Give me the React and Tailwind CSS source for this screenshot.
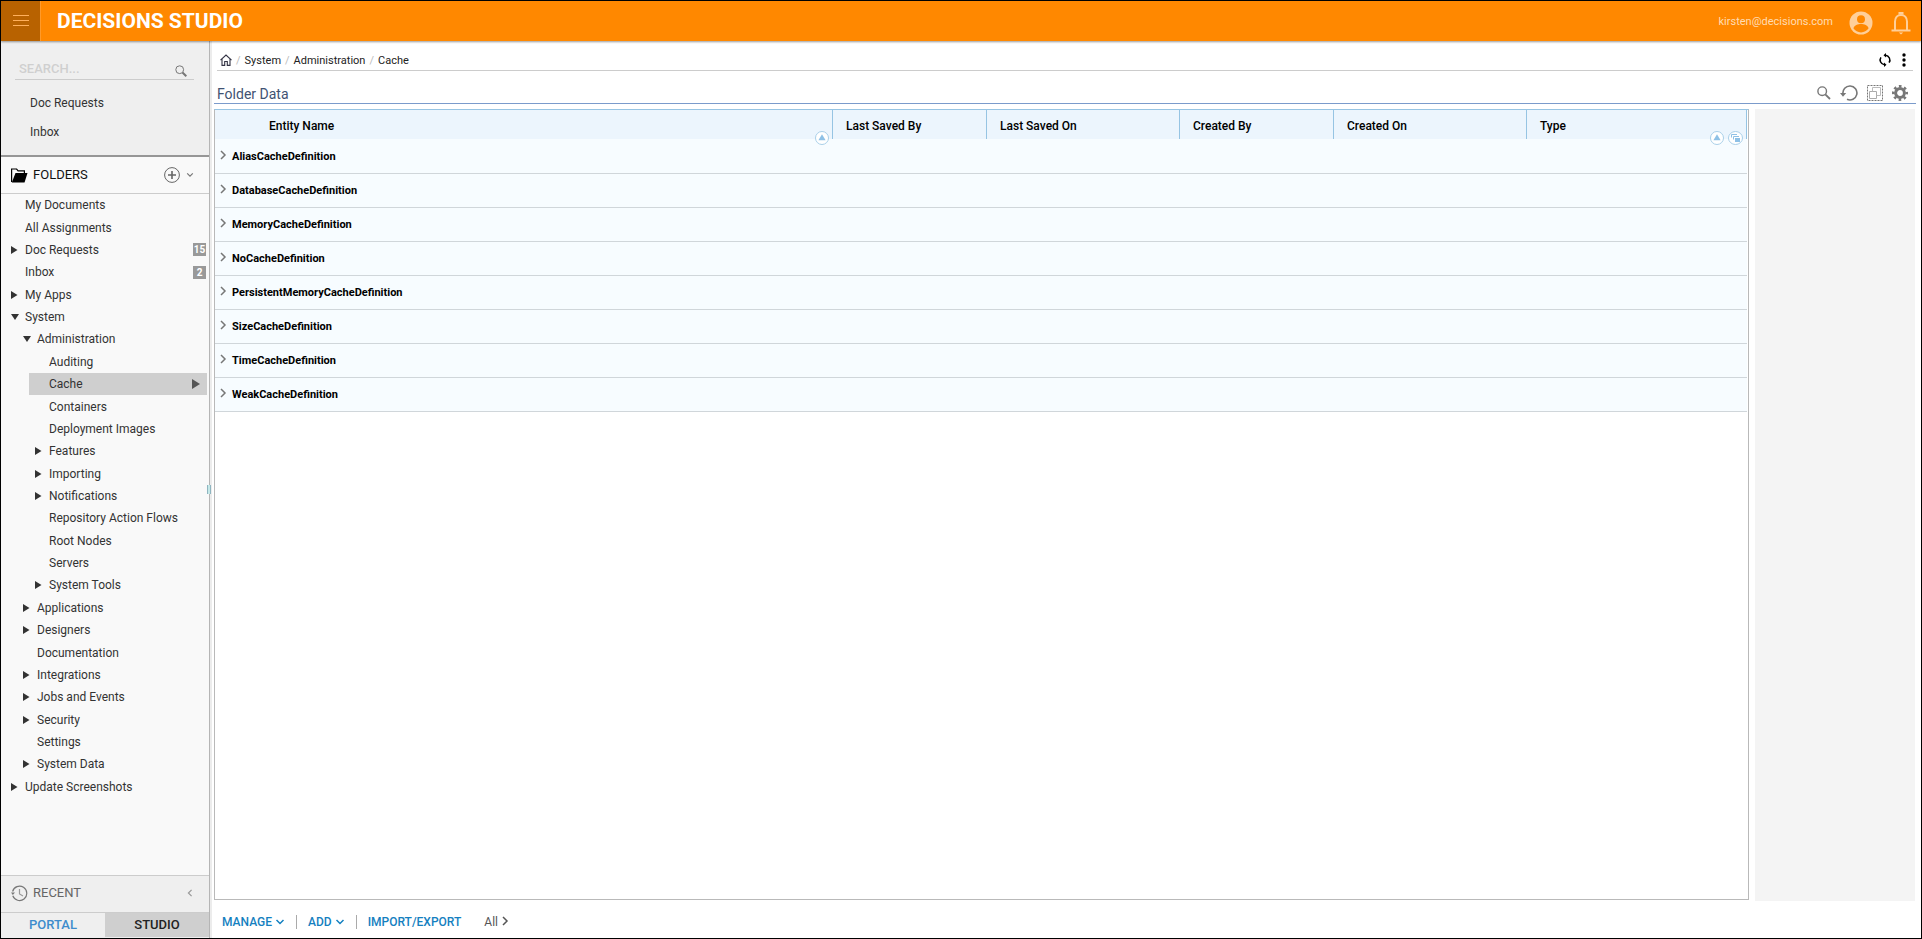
import React from "react";

const shortcuts = ["Doc Requests", "Inbox"];

const folders = [
  { name: "My Documents", level: 0 },
  { name: "All Assignments", level: 0 },
  { name: "Doc Requests", level: 0, state: "closed", count: 15 },
  { name: "Inbox", level: 0, count: 2 },
  { name: "My Apps", level: 0, state: "closed" },
  { name: "System", level: 0, state: "open" },
  { name: "Administration", level: 1, state: "open" },
  { name: "Auditing", level: 2 },
  { name: "Cache", level: 2, selected: true },
  { name: "Containers", level: 2 },
  { name: "Deployment Images", level: 2 },
  { name: "Features", level: 2, state: "closed" },
  { name: "Importing", level: 2, state: "closed" },
  { name: "Notifications", level: 2, state: "closed" },
  { name: "Repository Action Flows", level: 2 },
  { name: "Root Nodes", level: 2 },
  { name: "Servers", level: 2 },
  { name: "System Tools", level: 2, state: "closed" },
  { name: "Applications", level: 1, state: "closed" },
  { name: "Designers", level: 1, state: "closed" },
  { name: "Documentation", level: 1 },
  { name: "Integrations", level: 1, state: "closed" },
  { name: "Jobs and Events", level: 1, state: "closed" },
  { name: "Security", level: 1, state: "closed" },
  { name: "Settings", level: 1 },
  { name: "System Data", level: 1, state: "closed" },
  { name: "Update Screenshots", level: 0, state: "closed" },
];

const indent = ["ml-1", "ml-4", "ml-7"];

const columns = [
  { name: "Last Saved By", width: "w-[154px]" },
  { name: "Last Saved On", width: "w-[193px]" },
  { name: "Created By", width: "w-[154px]" },
  { name: "Created On", width: "w-[193px]" },
  { name: "Type", width: "w-[220px]" },
];

const groups = [
  "AliasCacheDefinition",
  "DatabaseCacheDefinition",
  "MemoryCacheDefinition",
  "NoCacheDefinition",
  "PersistentMemoryCacheDefinition",
  "SizeCacheDefinition",
  "TimeCacheDefinition",
  "WeakCacheDefinition",
];

const Chevron = ({ d, className, width = 1.5 }) => (
  <svg viewBox="0 0 10 10" className={className} fill="none" stroke="currentColor" strokeWidth={width}>
    <path d={d} />
  </svg>
);

const DOWN = "M1.5 3 5 6.5 8.5 3";
const RIGHT = "M3 1 7 5 3 9";
const LEFT = "M7 1 3 5 7 9";

const SortBadge = () => (
  <svg viewBox="0 0 14 14" className="h-3.5 w-3.5">
    <circle cx="7" cy="7" r="6.5" fill="#fff" stroke="#a9cfe8" strokeWidth="1" />
    <path d="M7 3.2 10.6 9.2H3.4z" fill="#8fc1e6" />
  </svg>
);

const GroupBadge = () => (
  <svg viewBox="0 0 15 14" className="h-3.5 w-[15px]">
    <ellipse cx="7.5" cy="7" rx="7" ry="6.5" fill="#fff" stroke="#a9cfe8" strokeWidth="1" />
    <path d="M3.5 6.5v-3H9" fill="none" stroke="#8fc1e6" />
    <path d="M5.5 8.5v-3H11" fill="none" stroke="#8fc1e6" />
    <path d="M7 7h5v4H7z" fill="#8fc1e6" />
  </svg>
);

const Header = () => (
  <header className="relative z-10 flex h-10 shrink-0 items-center bg-[#ff8800] shadow-[0_1px_2px_rgba(0,0,0,0.4)]">
    <button
      aria-label="Menu"
      className="flex h-10 w-10 items-center justify-center border-r border-[#ff9a2a] bg-[#b86200]"
    >
      <svg viewBox="0 0 16 12" className="h-3 w-4" stroke="#ffb05c" strokeWidth="1">
        <path d="M0 .5h16M0 5.5h16M0 10.5h16" />
      </svg>
    </button>
    <h1 className="ml-4 pt-0.5 text-[21px] font-bold text-white">DECISIONS STUDIO</h1>
    <div className="ml-auto flex items-center pr-2.5">
      <span className="pt-0.5 text-[11px] text-[#ffdcb3]">kirsten@decisions.com</span>
      <button aria-label="Account" className="ml-4 pt-1">
        <svg viewBox="0 0 24 24" className="h-6 w-6">
          <circle cx="12" cy="12" r="11.5" fill="#ffcf99" />
          <circle cx="12" cy="8.3" r="4" fill="#ff8800" />
          <path d="M4.5 17.6c0-3.2 4.8-4.6 7.5-4.6s7.5 1.4 7.5 4.6c-1.7 2.3-4.4 3.8-7.5 3.8s-5.8-1.5-7.5-3.8z" fill="#ff8800" />
        </svg>
      </button>
      <button aria-label="Notifications" className="ml-[18px] pt-1">
        <svg viewBox="0 0 20 24" className="h-6 w-5" fill="none" stroke="#ffcf99" strokeWidth="2">
          <path d="M4 19V10.5C4 6.5 6.6 3.9 10 3.9s6 2.6 6 6.6V19" />
          <path d="M.5 19.5h19" />
          <path d="M8.5 3.5V2h3v1.5" />
          <path d="M7.8 21.6h4.4L10 23.6z" fill="#ffcf99" stroke="none" />
        </svg>
      </button>
    </div>
  </header>
);

const FolderRow = ({ folder }) => (
  <li className="flex">
    <a
      href="#"
      className={`flex flex-1 items-center ${indent[folder.level]} ${folder.selected ? "bg-[#cfcfcf]" : ""}`}
    >
      <span className="flex w-5 shrink-0 pl-1.5">
        {folder.state === "closed" && (
          <svg viewBox="0 0 8 8" className="h-2 w-2" fill="#333">
            <path d="M0 0 6.5 4 0 8z" />
          </svg>
        )}
        {folder.state === "open" && (
          <svg viewBox="0 0 8 8" className="h-2 w-2" fill="#333">
            <path d="M0 1h8L4 7z" />
          </svg>
        )}
      </span>
      <span className="text-xs text-[#333]">{folder.name}</span>
      {folder.count && (
        <span className="ml-auto mr-px flex h-[13px] w-[13px] items-center justify-center bg-[#999] text-[10px] font-bold text-white">
          {folder.count}
        </span>
      )}
      {folder.selected && (
        <svg viewBox="0 0 8 10" className="ml-auto mr-[7px] h-2.5 w-2" fill="#555">
          <path d="M0 0 8 5 0 10z" />
        </svg>
      )}
    </a>
  </li>
);

const Sidebar = () => (
  <aside className="relative flex w-[209px] shrink-0 flex-col border-r border-[#b5b5b5] bg-[#f9f9f9]">
    <div className="border-b-2 border-[#969696] bg-[#efefef] pb-[9px]">
      <div className="ml-3.5 mr-[15px] flex h-[39px] items-end border-b border-[#ccc]">
        <input
          aria-label="Search"
          placeholder="SEARCH..."
          className="mb-px w-0 flex-1 pl-1 text-[13px] font-medium outline-none placeholder:text-[#cfcfcf]"
        />
        <button aria-label="Run search" className="mb-0.5 mr-[7px]">
          <svg viewBox="0 0 12 12" className="h-3 w-3" fill="none" stroke="#777">
            <circle cx="4.7" cy="4.7" r="3.9" strokeWidth="1" />
            <path d="M7.5 7.5 11.3 11.3" strokeWidth="2" />
          </svg>
        </button>
      </div>
      <nav className="pt-2">
        {shortcuts.map((name) => (
          <a key={name} href="#" className="flex h-[29px] items-center pl-[29px] text-xs text-[#333]">
            {name}
          </a>
        ))}
      </nav>
    </div>

    <div className="flex h-[37px] shrink-0 items-center border-b border-[#ccc] pl-2.5">
      <svg viewBox="0 0 17 15" className="h-[15px] w-[17px]">
        <path d="M.6 14V1h5l1.5 1.8h6.3V5" fill="none" stroke="#000" strokeWidth="1.2" />
        <path d="M.8 14.6 4.5 5h12l-3 9.6z" fill="#000" />
      </svg>
      <h2 className="ml-[5px] text-[13px] text-[#111]">FOLDERS</h2>
      <button aria-label="Add folder" className="ml-auto">
        <svg viewBox="0 0 16 16" className="h-4 w-4" fill="none" stroke="#666">
          <circle cx="8" cy="8" r="7.4" />
          <path d="M8 4v8M4 8h8" strokeWidth="1.6" />
        </svg>
      </button>
      <button aria-label="Folder options" className="ml-1.5 mr-[15px] text-[#777]">
        <Chevron d={DOWN} className="h-2 w-2" />
      </button>
    </div>

    <ul className="mr-0.5 grid h-[604px] shrink-0 auto-rows-fr">
      {folders.map((folder) => (
        <FolderRow key={folder.name + folder.level} folder={folder} />
      ))}
    </ul>

    <div className="mt-auto flex h-[37px] shrink-0 items-center border-t border-[#ccc] bg-[#efefef] pb-0.5 pl-2.5">
      <svg viewBox="0 0 17 17" className="h-[17px] w-[17px]" fill="none" stroke="#777" strokeWidth="1.2">
        <path d="M1.8 10.8A7.2 7.2 0 1 0 1.6 6.5" />
        <path d="M0 7.5h4L1.8 10z" fill="#777" stroke="none" />
        <path d="M8.5 4v5l3.5 2" stroke="#999" />
      </svg>
      <span className="ml-[5px] text-[13px] text-[#666]">RECENT</span>
      <button aria-label="Expand recent" className="ml-auto mr-[15px] text-[#999]">
        <Chevron d={LEFT} className="h-2 w-2" />
      </button>
    </div>
    <div className="flex h-[26px] shrink-0 border-t border-[#ccc] bg-[#efefef] pb-px text-[13px]">
      <button className="flex-1 font-medium text-[#3e8ccc]">PORTAL</button>
      <button className="flex-1 bg-[#cfcfcf] font-medium text-[#222]">STUDIO</button>
    </div>

    {/* Splitter grip */}
    <span className="absolute -right-0.5 top-[444px] h-[9px] w-1 border-x border-[#8fb5c0] bg-[#c5e8e8]" />
  </aside>
);

const Breadcrumbs = () => (
  <div className="ml-[3px] mr-[7px] flex h-[30px] items-center border-b border-[#ccc] pl-[3px]">
    <nav className="flex items-center gap-1 pt-[11px] text-[11px] text-[#222]">
      <a href="#" aria-label="Home">
        <svg viewBox="0 0 12 12" className="mb-0.5 h-3 w-3" fill="none" stroke="#334" strokeWidth="1.1">
          <path d="M.5 6.2 6 1l5.5 5.2M2 5v6.4h2.7V7.5h2.6v3.9H10V5" />
        </svg>
      </a>
      {["System", "Administration", "Cache"].map((name) => (
        <React.Fragment key={name}>
          <span className="text-[#bbb]">/</span>
          <a href="#">{name}</a>
        </React.Fragment>
      ))}
    </nav>
    <div className="ml-auto mr-[7px] flex items-center gap-2.5 pt-2">
      <button aria-label="Refresh page">
        <svg viewBox="0 0 14 14" className="h-3.5 w-3.5" fill="none" stroke="#000" strokeWidth="1.5">
          <path d="M7.5 2.3a4.8 4.8 0 0 1 3.6 7.400M6.500 11.700a4.800 4.800 0 0 1-3.600-7.400" />
          <path d="M8 0v4.600L5.500 2.300zM6 9.400v4.600l2.500-2.300z" fill="#000" stroke="none" />
        </svg>
      </button>
      <button aria-label="More actions">
        <svg viewBox="0 0 4 14" className="h-3.5 w-1" fill="#000">
          <circle cx="2" cy="2" r="1.7" />
          <circle cx="2" cy="7" r="1.7" />
          <circle cx="2" cy="12" r="1.7" />
        </svg>
      </button>
    </div>
  </div>
);

const TitleBar = () => (
  <div className="mr-1 flex h-[33px] items-end border-b border-[#7b9bcb] pl-[3px]">
    <h2 className="text-sm leading-[18px] text-[#3f5272]">Folder Data</h2>
    <div className="ml-auto mr-2 flex items-center gap-[9px] pb-0.5 text-[#777]">
      <button aria-label="Search data">
        <svg viewBox="0 0 14 14" className="h-3.5 w-3.5" fill="none" stroke="currentColor">
          <circle cx="5.2" cy="5.2" r="4.3" strokeWidth="1.4" />
          <path d="M8.3 8.3 13 13" strokeWidth="1.8" />
        </svg>
      </button>
      <button aria-label="Reload data">
        <svg viewBox="0 0 18 16" className="h-4 w-[18px]" fill="none" stroke="currentColor" strokeWidth="1.6">
          <path d="M3 9A7 7 0 1 1 7 14.3" />
          <path d="M0 8h6.2L3 11.8z" fill="currentColor" stroke="none" />
        </svg>
      </button>
      <button aria-label="Select items">
        <svg viewBox="0 0 16 16" className="h-4 w-4" fill="none">
          <path d="M.5.5h15v15H.5z" stroke="#777" strokeDasharray="2 1" />
          <path d="M2.5 6.5h7v7h-7z" stroke="#aaa" />
          <path d="M5.500 6.500v-4h8v8h-4" stroke="#bbb" />
        </svg>
      </button>
      <button aria-label="Settings">
        <svg viewBox="0 0 16 16" className="h-4 w-4" fill="none" stroke="currentColor">
          <circle cx="8" cy="8" r="4.4" strokeWidth="3" />
          <circle cx="8" cy="8" r="6.7" strokeWidth="2.6" strokeDasharray="2.6 2.66" strokeDashoffset="1.3" />
        </svg>
      </button>
    </div>
  </div>
);

const FolderTable = () => (
  <div className="flex-1 border border-[#b9b9b9] border-t-[#96c4e3] pr-px">
    <table className="w-full table-fixed border-collapse text-left text-black">
      <thead>
        <tr className="h-[29px] bg-[#ecf5fd] text-xs">
          <th className="relative pl-[54px] pt-0.5 font-medium">
            Entity Name
            <button aria-label="Sort by entity name" className="absolute -bottom-1.5 right-[3px]">
              <SortBadge />
            </button>
          </th>
          {columns.map((column) => (
            <th
              key={column.name}
              className={`relative border-l border-[#96c4e3] pl-[13px] pt-0.5 font-medium last:border-r ${column.width}`}
            >
              {column.name}
              {column.name === "Type" && (
                <span className="absolute -bottom-1.5 right-[3px] flex gap-1">
                  <button aria-label="Sort by type">
                    <SortBadge />
                  </button>
                  <button aria-label="Group by type">
                    <GroupBadge />
                  </button>
                </span>
              )}
            </th>
          ))}
        </tr>
      </thead>
      <tbody className="text-[11px]">
        {groups.map((name) => (
          <tr key={name} className="h-[34px] border-b border-[#d0d6da] bg-[#f7fcff]">
            <td colSpan={6} className="font-bold">
              <button className="flex items-start pl-[3px] pt-[3px]">
                <Chevron d={RIGHT} className="mt-px h-2.5 w-2.5 text-[#777]" />
                <span className="ml-1">{name}</span>
              </button>
            </td>
          </tr>
        ))}
      </tbody>
    </table>
  </div>
);

const ActionBar = () => (
  <div className="flex h-[38px] shrink-0 items-center pl-2 pt-1.5 text-xs font-medium text-[#1480c0]">
    <button className="flex items-center gap-[3px]">
      MANAGE <Chevron d={DOWN} className="h-2.5 w-2.5" />
    </button>
    <span className="mx-[11px] h-3.5 w-px bg-[#aaa]" />
    <button className="flex items-center gap-[3px]">
      ADD <Chevron d={DOWN} className="h-2.5 w-2.5" />
    </button>
    <span className="mx-[11px] h-3.5 w-px bg-[#aaa]" />
    <button>IMPORT/EXPORT</button>
    <button className="ml-[23px] flex items-center gap-0.5 font-normal text-[#555]">
      All <Chevron d={RIGHT} className="mb-0.5 h-2.5 w-2.5" />
    </button>
  </div>
);

const App = () => {
  return (
    <div className="flex h-screen min-h-[860px] flex-col border border-black bg-white font-['Roboto',sans-serif]">
      <Header />
      <div className="flex min-h-0 flex-1">
        <Sidebar />
        <main className="flex min-w-0 flex-1 flex-col border-l-2 border-[#ececec] pl-0.5 pr-px">
          <Breadcrumbs />
          <TitleBar />
          <div className="mt-[5px] flex flex-1 gap-[6px] pr-[5px]">
            <FolderTable />
            <div className="-mb-px w-40 bg-[#f4f4f4]" />
          </div>
          <ActionBar />
        </main>
      </div>
    </div>
  );
};

export default App;
